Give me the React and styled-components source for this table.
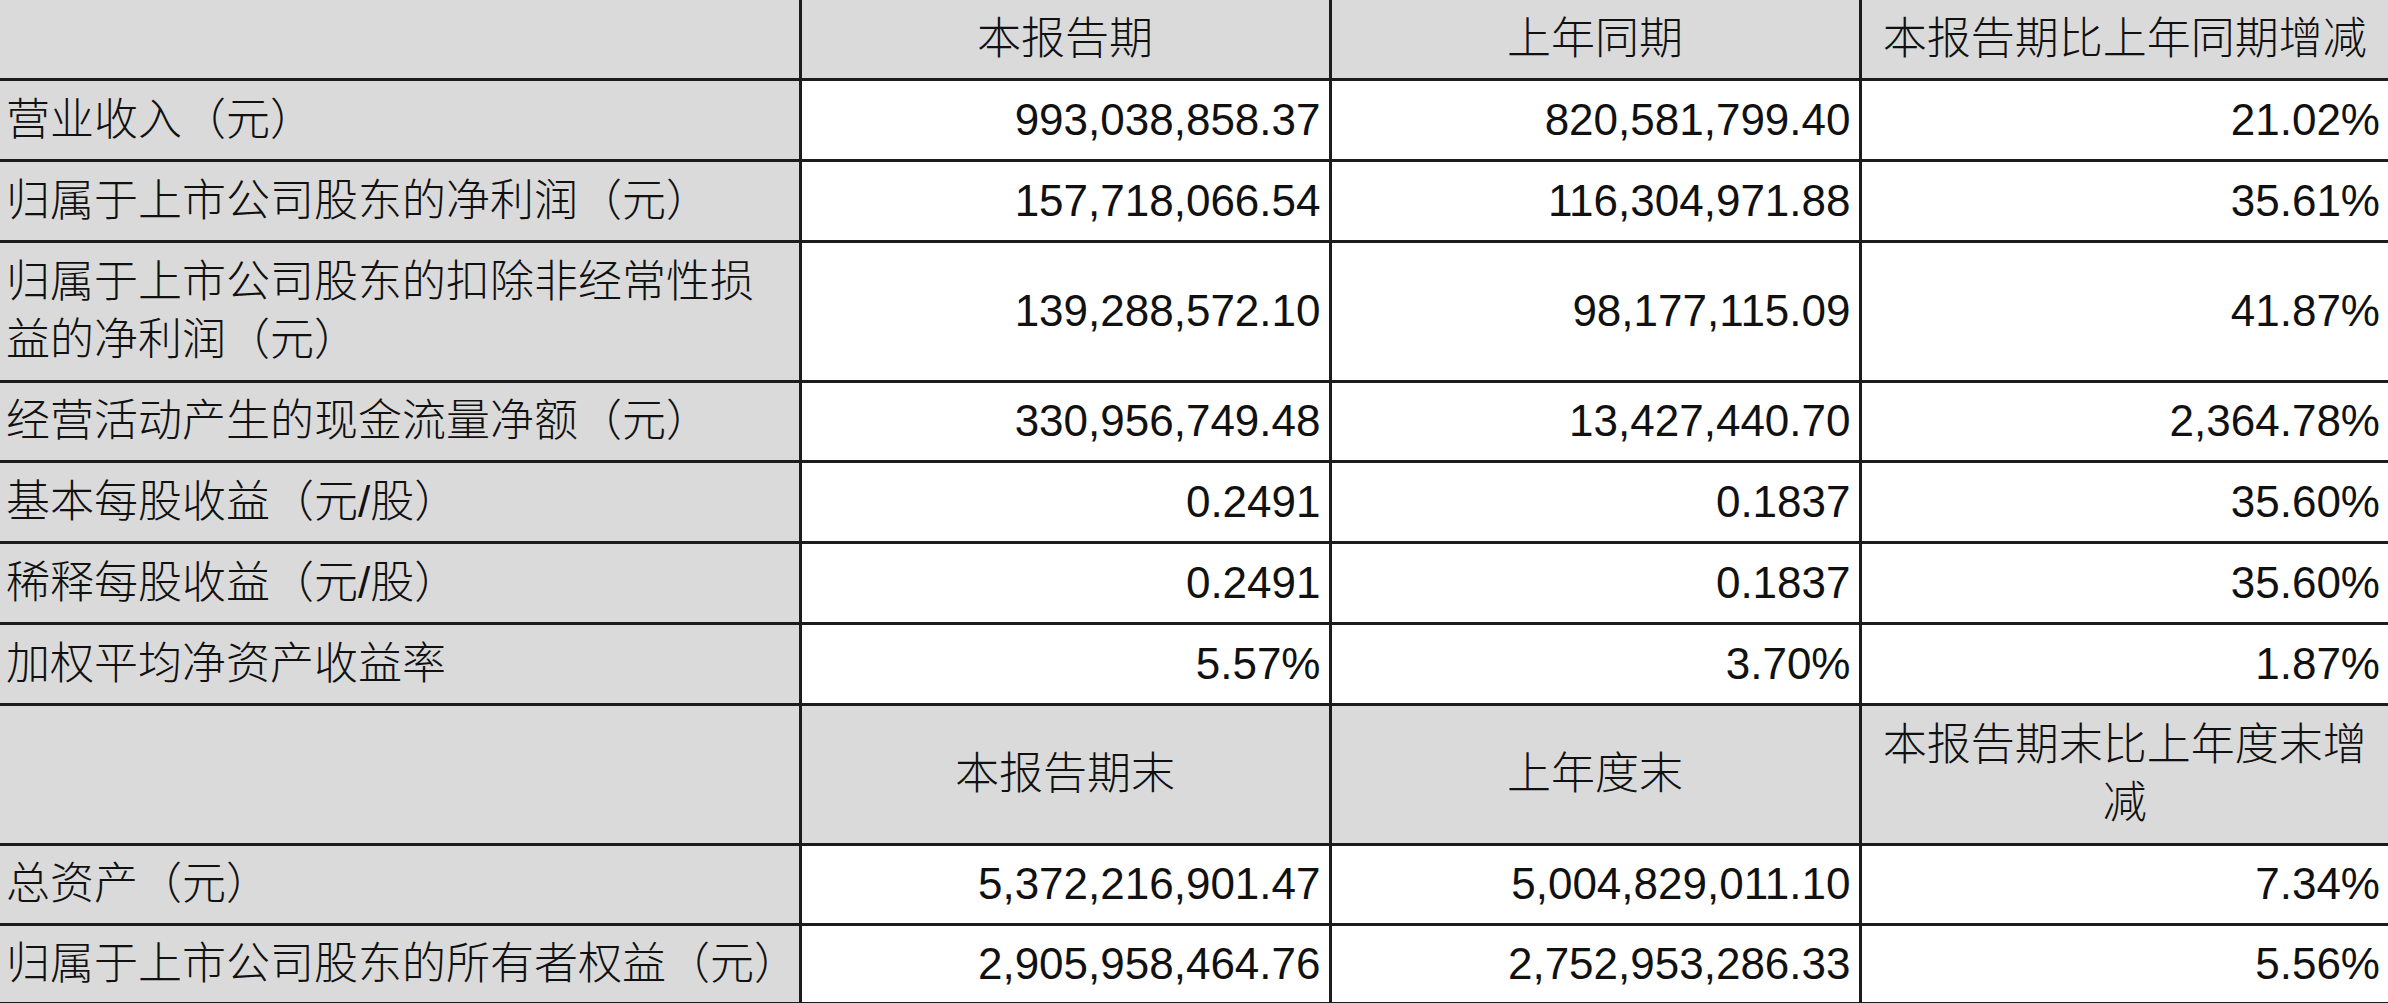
import React from 'react';
import styled, { createGlobalStyle } from 'styled-components';

const GlobalStyle = createGlobalStyle`
  html, body {
    margin: 0;
    padding: 0;
    background: #ffffff;
    overflow: hidden;
  }
`;

const LINE = '3px solid #1c1c1c';
const GREY = '#dadada';

const Table = styled.table`
  width: 2388px;
  table-layout: fixed;
  border-collapse: collapse;
  font-family: 'Liberation Sans', 'Noto Sans CJK SC', sans-serif;
  font-size: 44px;
  font-weight: 300;
  color: #111;
`;

const Col = styled.col`
  width: ${(p) => p.$w}px;
`;

const Row = styled.tr`
  height: ${(p) => p.$h}px;
`;

// cabeçalho cinza, centralizado
const HeadCell = styled.td`
  background: ${GREY};
  text-align: center;
  vertical-align: middle;
  line-height: 58px;
  padding: 0 6px;
  border: ${LINE};
  border-top: ${(p) => (p.$top ? LINE : 'none')};
  &:first-child { border-left: none; }
  &:last-child { border-right: none; }
`;

// rótulo da linha (coluna da esquerda)
const Label = styled.td`
  background: ${GREY};
  text-align: left;
  vertical-align: middle;
  line-height: 58px;
  padding: 0 2px 0 6px;
  white-space: ${(p) => (p.$nowrap ? 'nowrap' : 'normal')};
  border: ${LINE};
  border-left: none;
`;

const Value = styled.td`
  background: #ffffff;
  font-weight: 400;
  text-align: right;
  vertical-align: middle;
  padding: 0 8px 0 6px;
  white-space: nowrap;
  border: ${LINE};
  &:last-child { border-right: none; }
`;

const widths = [800, 530, 530, 528];

const rowsTop = [
  { label: '营业收入（元）', v: ['993,038,858.37', '820,581,799.40', '21.02%'], h: 81 },
  { label: '归属于上市公司股东的净利润（元）', v: ['157,718,066.54', '116,304,971.88', '35.61%'], h: 81 },
  { label: '归属于上市公司股东的扣除非经常性损益的净利润（元）', v: ['139,288,572.10', '98,177,115.09', '41.87%'], h: 140 },
  { label: '经营活动产生的现金流量净额（元）', v: ['330,956,749.48', '13,427,440.70', '2,364.78%'], h: 80 },
  { label: '基本每股收益（元/股）', v: ['0.2491', '0.1837', '35.60%'], h: 81 },
  { label: '稀释每股收益（元/股）', v: ['0.2491', '0.1837', '35.60%'], h: 81 },
  { label: '加权平均净资产收益率', v: ['5.57%', '3.70%', '1.87%'], h: 81 },
];

const rowsBottom = [
  { label: '总资产（元）', v: ['5,372,216,901.47', '5,004,829,011.10', '7.34%'], h: 80 },
  { label: '归属于上市公司股东的所有者权益（元）', v: ['2,905,958,464.76', '2,752,953,286.33', '5.56%'], h: 79, nowrap: true },
];

const HeadRow = ({ h, top, titles }) => (
  <Row $h={h}>
    <HeadCell $top={top} />
    {titles.map((t) => (
      <HeadCell key={t} $top={top}>{t}</HeadCell>
    ))}
  </Row>
);

const DataRow = ({ row }) => (
  <Row $h={row.h}>
    <Label $nowrap={row.nowrap}>{row.label}</Label>
    {row.v.map((x, i) => (
      <Value key={i}>{x}</Value>
    ))}
  </Row>
);

const App = () => {
  return (
    <>
      <GlobalStyle />
      <Table>
        <colgroup>
          {widths.map((w, i) => (
            <Col key={i} $w={w} />
          ))}
        </colgroup>
        <tbody>
          <HeadRow h={79} titles={['本报告期', '上年同期', '本报告期比上年同期增减']} />
          {rowsTop.map((r) => (
            <DataRow key={r.label} row={r} />
          ))}
          <HeadRow h={140} top titles={['本报告期末', '上年度末', '本报告期末比上年度末增减']} />
          {rowsBottom.map((r) => (
            <DataRow key={r.label} row={r} />
          ))}
        </tbody>
      </Table>
    </>
  );
};

export default App;
